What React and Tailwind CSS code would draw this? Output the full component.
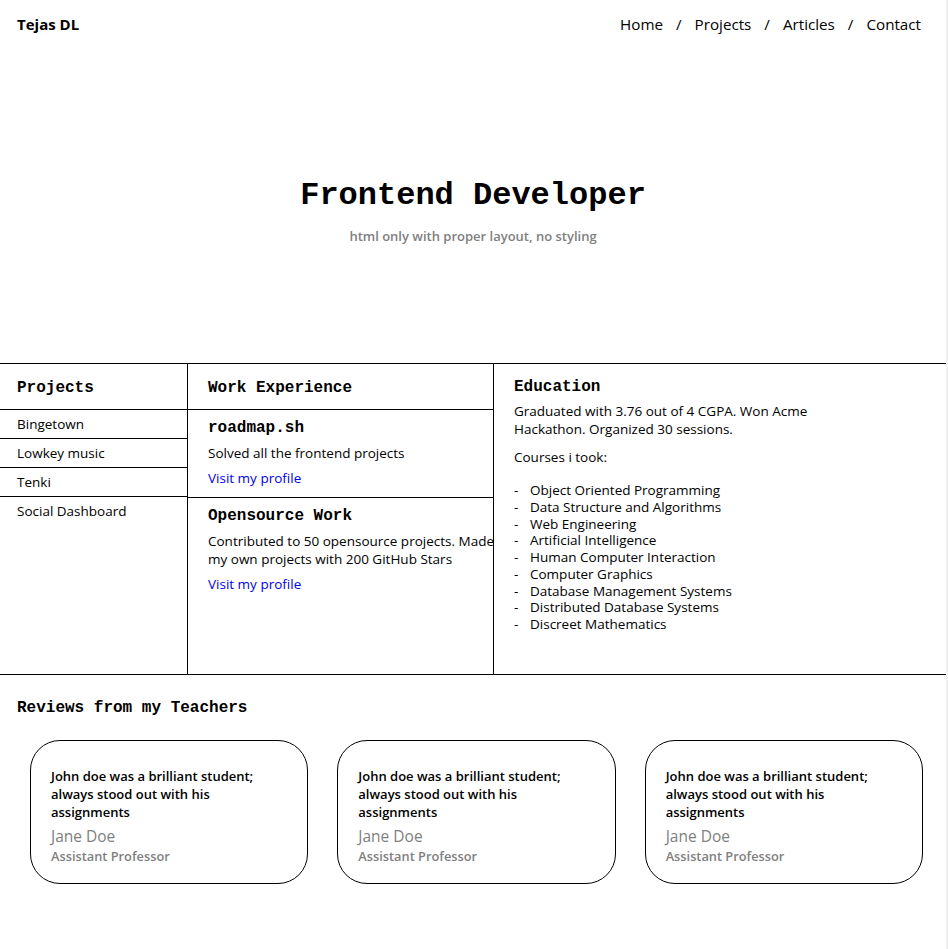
import React from "react";

const sans = "font-['Open_Sans',sans-serif]";
const mono = "font-['Liberation_Mono',monospace]";

const courses = [
  "Object Oriented Programming",
  "Data Structure and Algorithms",
  "Web Engineering",
  "Artificial Intelligence",
  "Human Computer Interaction",
  "Computer Graphics",
  "Database Management Systems",
  "Distributed Database Systems",
  "Discreet Mathematics",
];

function Review() {
  return (
    <div className="h-[144px] rounded-[30px] border border-black px-[20px] pt-[26px]">
      <p className="text-[13px] leading-[18px] font-semibold text-black">
        John doe was a brilliant student;
        <br />
        always stood out with his
        <br />
        assignments
      </p>
      <p className="mt-[5px] text-[15.5px] leading-[20px] text-[#808080]">Jane Doe</p>
      <p className="mt-[1px] text-[12.8px] leading-[18px] font-semibold text-[#808080]">Assistant Professor</p>
    </div>
  );
}

export default function App() {
  return (
    <div className={`flex min-h-screen bg-white text-black ${sans}`}>
      <div className="w-[946px] shrink-0">
        <header className="flex h-[48px] items-center justify-between pl-[17px] pr-[25px]">
          <span className="text-[15px] font-bold">Tejas DL</span>
          <nav className="flex items-center gap-[13px] text-[15.2px]">
            <span>Home</span>
            <span>/</span>
            <span>Projects</span>
            <span>/</span>
            <span>Articles</span>
            <span>/</span>
            <span>Contact</span>
          </nav>
        </header>

        <section className="flex h-[315px] flex-col items-center pt-[128px]">
          <h1 className={`${mono} text-[32px] leading-[40px] font-bold`}>Frontend Developer</h1>
          <p className="mt-[10px] text-[13px] leading-[20px] font-semibold text-[#808080]">
            html only with proper layout, no styling
          </p>
        </section>

        <section className="flex h-[312px] border-y border-black text-[13.5px]">
          <div className="w-[188px] shrink-0 border-r border-black">
            <h2 className={`${mono} flex h-[46px] items-center border-b border-black pl-[17px] pt-[2px] text-[16px] font-bold`}>
              Projects
            </h2>
            {["Bingetown", "Lowkey music", "Tenki"].map((p) => (
              <div key={p} className="flex h-[29px] items-center border-b border-black pl-[17px]">
                {p}
              </div>
            ))}
            <div className="flex h-[29px] items-center pl-[17px]">Social Dashboard</div>
          </div>

          <div className="w-[306px] shrink-0 border-r border-black">
            <h2 className={`${mono} flex h-[46px] items-center border-b border-black pl-[20px] pt-[2px] text-[16px] font-bold`}>
              Work Experience
            </h2>
            <div className="h-[88px] border-b border-black pl-[20px] pt-[8px]">
              <h3 className={`${mono} text-[16px] leading-[20px] font-bold`}>roadmap.sh</h3>
              <p className="mt-[6px] leading-[18px]">Solved all the frontend projects</p>
              <a href="#" className="mt-[6px] block leading-[20px] text-[#0000ee]">
                Visit my profile
              </a>
            </div>
            <div className="pl-[20px] pt-[8px]">
              <h3 className={`${mono} text-[16px] leading-[20px] font-bold`}>Opensource Work</h3>
              <p className="mt-[6px] whitespace-nowrap leading-[18px]">
                Contributed to 50 opensource projects. Made
                <br />
                my own projects with 200 GitHub Stars
              </p>
              <a href="#" className="mt-[6px] block leading-[20px] text-[#0000ee]">
                Visit my profile
              </a>
            </div>
          </div>

          <div className="flex-1 pl-[20px] pt-[13px]">
            <h2 className={`${mono} text-[16px] leading-[20px] font-bold`}>Education</h2>
            <p className="mt-[5px] leading-[18px]">
              Graduated with 3.76 out of 4 CGPA. Won Acme
              <br />
              Hackathon. Organized 30 sessions.
            </p>
            <p className="mt-[10px] leading-[18px]">Courses i took:</p>
            <ul className="mt-[16px] leading-[16.75px]">
              {courses.map((c) => (
                <li key={c} className="flex">
                  <span className="w-[16px] shrink-0">-</span>
                  <span>{c}</span>
                </li>
              ))}
            </ul>
          </div>
        </section>

        <section className="pb-[64px]">
          <h2 className={`${mono} mt-[23px] pl-[17px] text-[16px] leading-[20px] font-bold`}>
            Reviews from my Teachers
          </h2>
          <div className="ml-[30px] mt-[22px] grid w-[893px] grid-cols-3 gap-[29px]">
            <Review />
            <Review />
            <Review />
          </div>
        </section>
      </div>
      <div className="w-[2px] shrink-0 bg-[#f0f0f0]" />
    </div>
  );
}
